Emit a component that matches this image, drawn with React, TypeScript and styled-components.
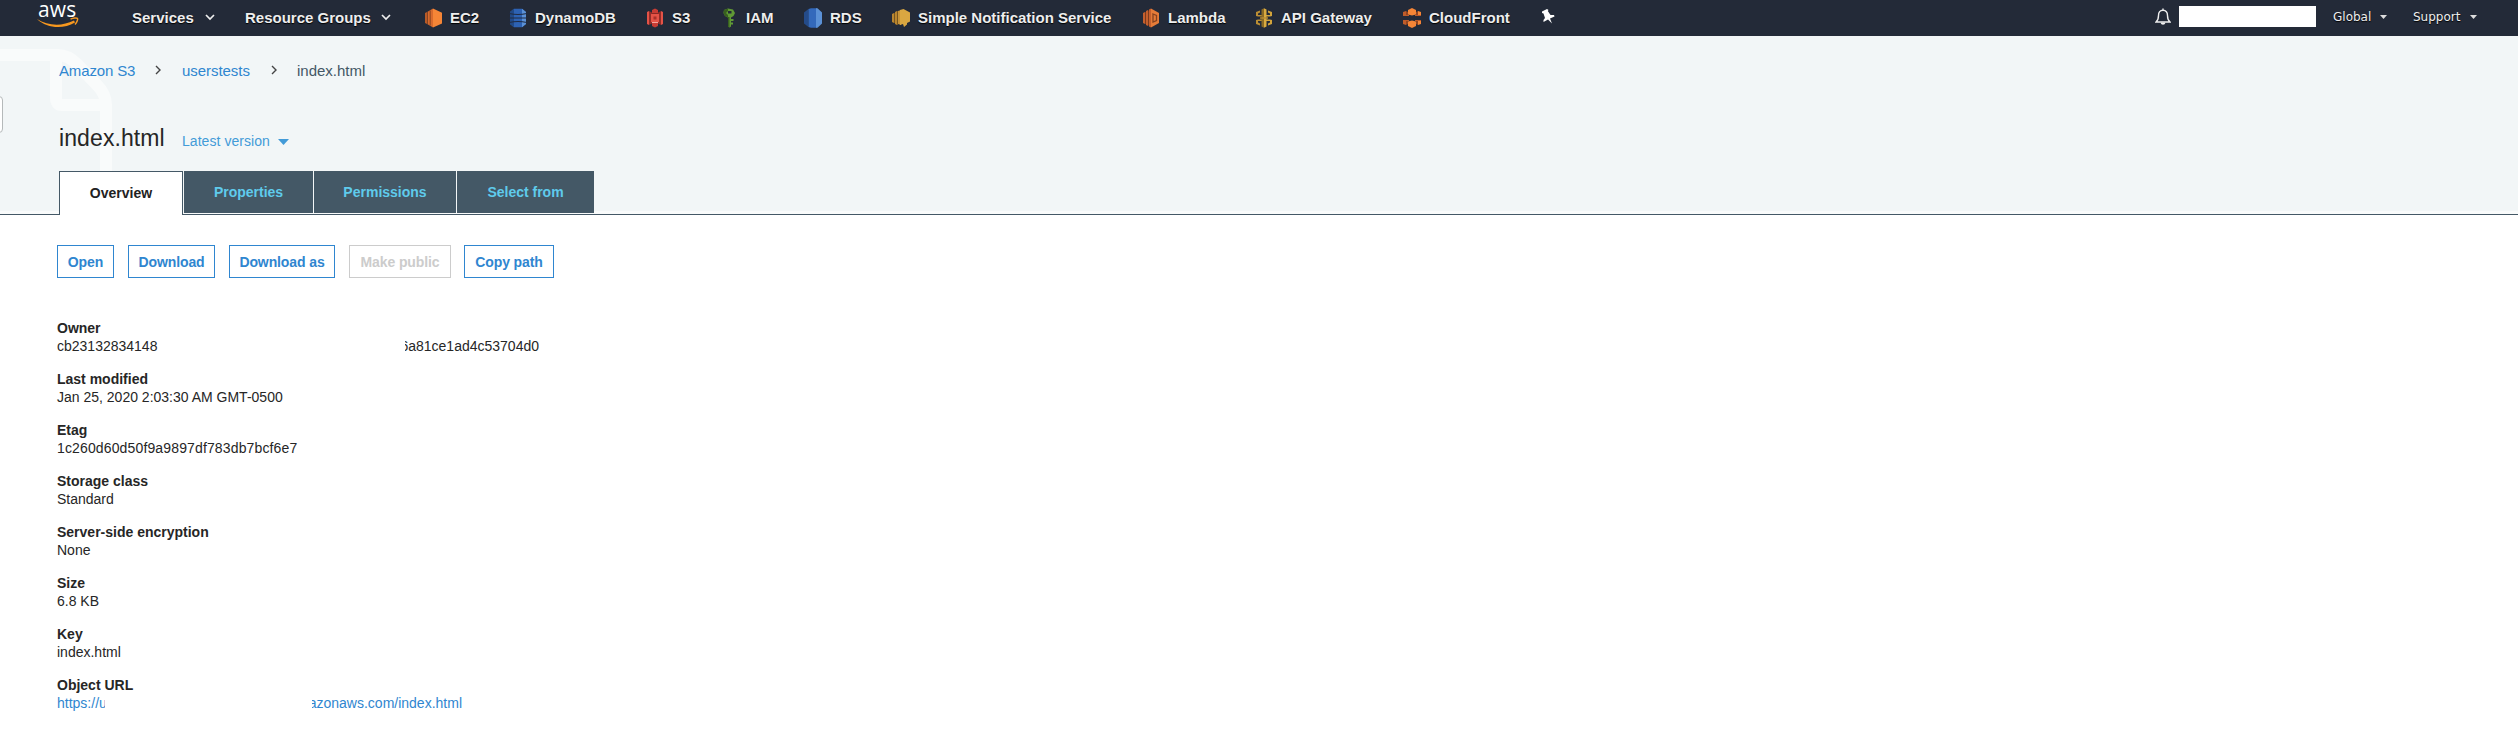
import React from "react";
import styled, { createGlobalStyle } from "styled-components";

const GlobalStyle = createGlobalStyle`
  * { box-sizing: border-box; }
  body { margin: 0; background: #fff; font-family: "Liberation Sans", Arial, sans-serif; font-size: 14px; color: #262626; }
  a { color: inherit; text-decoration: none; }
  svg { display: block; flex: none; }
`;

const Page = styled.div`
  height: 754px;
  overflow: hidden;
`;

const NavBar = styled.nav`
  display: flex;
  height: 36px;
  padding-left: 37px;
  background: #232a38;
  color: #eee;
  font-size: 15px;
  font-weight: bold;
  text-shadow: 0 1px 1px #000;
  white-space: nowrap;
`;

const Logo = styled.a`
  display: flex;
  flex-direction: column;
  width: 95px;
  color: #fff;
  font: 500 21px/20px "Open Sans", "Noto Sans", sans-serif;
  text-shadow: none;
  span { height: 17px; margin-top: -1px; padding-left: 1px; letter-spacing: 0.2px; }
`;

const NavMenu = styled.a<{ $width: number; $gap: number }>`
  display: flex;
  align-items: center;
  gap: ${(p) => p.$gap}px;
  width: ${(p) => p.$width}px;
  height: 34px;
`;

const Shortcut = styled.a<{ $width: number }>`
  display: flex;
  align-items: center;
  gap: 8px;
  width: ${(p) => p.$width}px;
  height: 36px;
  padding-bottom: 1px;
`;

const PinSlot = styled.div`
  padding-top: 9px;
`;

const Account = styled.div`
  display: flex;
  margin-left: auto;
  padding-right: 41px;
  font: 12px/34px "DejaVu Sans", sans-serif;
`;

const BellSlot = styled.div`
  width: 24px;
  padding-top: 8px;
`;

const AccountName = styled.div`
  width: 137px;
  height: 21px;
  margin: 6px 17px 0 0;
  background: #fff;
`;

const AccountMenu = styled.a<{ $width: number }>`
  display: flex;
  align-items: center;
  justify-content: space-between;
  width: ${(p) => p.$width}px;
  height: 34px;
  & + & { margin-left: 26px; }
`;

const Header = styled.header`
  position: relative;
  height: 179px;
  padding: 24px 0 0 59px;
  background: linear-gradient(#f2f6f7 175px, #f9fbfb 175px);
  border-bottom: 1px solid #445866;
`;

const FileWatermark = styled.svg`
  position: absolute;
  left: 0;
  top: 13px;
`;

const DrawerHandle = styled.div`
  position: absolute;
  left: -5px;
  top: 60px;
  width: 8px;
  height: 37px;
  border: 1px solid #b5b9ba;
  border-radius: 4px;
  background: #fff;
`;

const Breadcrumbs = styled.div`
  position: relative;
  display: flex;
  align-items: center;
  height: 20px;
  font-size: 15px;
  color: #445866;
`;

const Crumb = styled.a<{ $width: number; $spacing: number }>`
  width: ${(p) => p.$width}px;
  letter-spacing: ${(p) => p.$spacing}px;
  color: #2f86d0;
`;

const CrumbSlot = styled.span<{ $width: number }>`
  width: ${(p) => p.$width}px;
`;

const TitleRow = styled.div`
  position: relative;
  display: flex;
  align-items: baseline;
  height: 30px;
  margin-top: 43px;
`;

const Title = styled.h1`
  width: 123px;
  margin: 0;
  font-size: 23px;
  font-weight: normal;
  line-height: 30px;
  letter-spacing: 0.1px;
`;

const VersionMenu = styled.a`
  display: flex;
  align-items: baseline;
  gap: 8px;
  letter-spacing: 0.05px;
  color: #439bd8;
`;

const Tabs = styled.div`
  position: relative;
  display: flex;
  height: 44px;
  margin-top: 18px;
`;

const Tab = styled.a<{ $width: number; $active?: boolean }>`
  width: ${(p) => p.$width}px;
  height: ${(p) => (p.$active ? 44 : 42)}px;
  margin-right: 1px;
  border: ${(p) => (p.$active ? "1px solid #445866" : "0")};
  border-bottom: 0;
  background: ${(p) => (p.$active ? "#fff" : "#445866")};
  color: ${(p) => (p.$active ? "#222" : "#5fcbec")};
  font-weight: bold;
  line-height: 42px;
  text-align: center;
`;

const Actions = styled.div`
  display: flex;
  padding: 30px 0 0 57px;
`;

const ActionButton = styled.button<{ $width: number }>`
  width: ${(p) => p.$width}px;
  height: 33px;
  margin: 0 14px 0 0;
  padding: 1px 0 0;
  border: 1px solid #2f86d0;
  border-radius: 0;
  background: #fff;
  color: #2f86d0;
  font: bold 14px "Liberation Sans", Arial, sans-serif;
  letter-spacing: -0.1px;
  white-space: nowrap;
  &:disabled { border-color: #ccc; color: #ccc; }
  &:last-child { margin-left: -1px; }
`;

const Details = styled.dl`
  display: flex;
  flex-direction: column;
  gap: 15px;
  margin: 41px 0 0 57px;
  line-height: 18px;
`;

const Term = styled.dt`
  font-weight: bold;
`;

const Value = styled.dd<{ $link?: boolean; $spacing?: number }>`
  display: flex;
  height: 18px;
  margin: 0;
  letter-spacing: ${(p) => p.$spacing ?? 0}px;
  color: ${(p) => (p.$link ? "#2f86d0" : "inherit")};
`;

const Fragment = styled.span<{ $width: number; $end?: boolean }>`
  display: flex;
  justify-content: ${(p) => (p.$end ? "flex-end" : "flex-start")};
  width: ${(p) => p.$width}px;
  overflow: hidden;
`;

const Gap = styled.span<{ $width: number }>`
  width: ${(p) => p.$width}px;
`;

const Chevron = () => (
  <svg width="10" height="8" viewBox="0 0 10 8" fill="none" stroke="#eee" strokeWidth="1.7">
    <path d="M1 2l4 4 4-4" />
  </svg>
);

const CrumbArrow = () => (
  <svg width="6" height="10" viewBox="0 0 6 10" fill="none" stroke="#444" strokeWidth="1.4">
    <path d="M1 1l4 4-4 4" />
  </svg>
);

const Caret = () => (
  <svg width="7" height="4" viewBox="0 0 7 4">
    <path d="M0 0h7L3.5 4z" fill="#ddd" />
  </svg>
);

const ServiceIcon = ({ children }: { children: React.ReactNode }) => (
  <svg width="18" height="20" viewBox="0 0 18 20">{children}</svg>
);

const icons = {
  ec2: (
    <ServiceIcon>
      <path d="M1 5l3-1.500v13L1 15z" fill="#b95a27" />
      <path d="M4 3.500L9 .5v19l-5-3z" fill="#d86a2d" />
      <path d="M9 .5l9 4.300v10.600l-9 4.100z" fill="#f58536" />
      <path d="M3.500 4v12M6.200 2.500v15" stroke="#7f4121" strokeWidth=".9" />
    </ServiceIcon>
  ),
  dynamo: (
    <ServiceIcon>
      <path d="M1 4L5 .7h8L17 4v12l-4 3.300H5L1 16z" fill="#2d62b3" />
      <path d="M1 4L5 .7v18.600L1 16z" fill="#214a88" />
      <path d="M13 .7L17 4v12l-4 3.300z" fill="#5b91d6" />
      <path d="M0 5.500q9 2 18 0M0 10h18M0 14.500q9-2 18 0" fill="none" stroke="#202b42" strokeWidth="1.200" />
    </ServiceIcon>
  ),
  s3: (
    <ServiceIcon>
      <path d="M1 4l2-1v14l-2-1zM17 4l-2-1v14l2-1z" fill="#e55347" />
      <path d="M3 3l3 1.500v11L3 17zM15 3l-3 1.500v11l3 1.500z" fill="#922d28" />
      <path d="M9 .5l3 1.500v3.500H6V2zM9 19.500l3-1.500v-3.500H6V18z" fill="#c83c34" />
      <path d="M5 6h8v8H5z" fill="#e55347" />
      <path d="M7.500 8.500h3v3h-3z" fill="#a83029" />
      <path d="M6 5.500h6" stroke="#8c2723" />
      <path d="M6 14.500h6" stroke="#f4a39d" />
    </ServiceIcon>
  ),
  iam: (
    <ServiceIcon>
      <path d="M4 2L8 .5l5 1 2 3.500-1.500 3-2.500 1.500v9L9.500 19.500 8 18.500V9.500L5 8 3.500 5z" fill="#609a35" />
      <path d="M4 2L8 .5v2.500L6 5l2 2v11.500V9.500L5 8 3.500 5z" fill="#38601f" />
      <path d="M8 9h1.500v10.500L8 18.500z" fill="#38601f" />
      <path d="M8 3h3.500v2.500H8z" fill="#232a38" />
      <path d="M11 11h2.500v2H11zM11 14.500h2v2h-2z" fill="#609a35" />
    </ServiceIcon>
  ),
  rds: (
    <ServiceIcon>
      <path d="M0 4.500L4.500 1v18L0 15.500z" fill="#244b89" />
      <path d="M4.500 1L7 .2h6v19.600H7L4.500 19z" fill="#3369bb" />
      <path d="M12 .2h1.500L18 4.500v11l-4.500 4.300H12z" fill="#5b91d6" />
    </ServiceIcon>
  ),
  sns: (
    <ServiceIcon>
      <path d="M0 6l2-1v10l-2-1zM3 4l2-1v14l-2-1z" fill="#b9852f" />
      <path d="M2 5h1v10H2zM5 3h1v14H5z" fill="#76551f" />
      <path d="M6 3l3-1v15l-3-1z" fill="#c89438" />
      <path d="M8 2l3.500-1L18 4.500v9L15 15v1.500L12 19l-1-3-3 1z" fill="#d9a741" />
    </ServiceIcon>
  ),
  lambda: (
    <ServiceIcon>
      <path d="M1 5l2-1v12l-2-1zM4 3l2-1v16l-2-1zM7 1.500L9 .5v19l-2-1z" fill="#c45f2d" />
      <path d="M3 4h1v12H3zM6 2.500h1v15H6z" fill="#7c3a1c" />
      <path d="M9 .5L17 5v10l-8 4.500z" fill="#e57b38" />
      <path d="M11 6l3.500 1.500v5L11 14z" fill="none" stroke="#85421f" strokeWidth="1.300" />
    </ServiceIcon>
  ),
  api: (
    <ServiceIcon>
      <path d="M1 4l4-1.500v2L3 5.500V7h4v1.500H3L1 8zM1 16l4 1.500v-2l-2-1V13h4v-1.500H3L1 12z" fill="#bb8e34" />
      <path d="M17 4l-4-1.500v2l2 1V7h-4v1.500h4l2-.500zM17 16l-4 1.500v-2l2-1V13h-4v-1.500h4l2 .500z" fill="#d2a33b" />
      <path d="M6.500 1.500L9 .2v19.600l-2.500-1.300z" fill="#8a6a26" />
      <path d="M9 .2l2.500 1.300v17L9 19.800z" fill="#d9aa3f" />
      <path d="M5 9.300h8v1.400H5z" fill="#bb8e34" />
    </ServiceIcon>
  ),
  cloudfront: (
    <ServiceIcon>
      <path d="M0 4l3-1v4.500H0zM0 12.500h3V17l-3-1z" fill="#bf5c2a" />
      <path d="M18 4l-3-1v4.500h3zM18 12.500h-3V17l3-1z" fill="#f58536" />
      <path d="M3 3l2 1v3.500H3zM13 4l2-1v4.500h-2zM3 12.500h2V16l-2 1zM13 12.500h2V17l-2-1z" fill="#93451f" />
      <path d="M5 2l4-2 4 2v4.500L9 7.500 5 6.500zM5 13.500l4-1 4 1V18l-4 2-4-2z" fill="#f58536" />
      <path d="M0 7h6v1H0zM12 7h6v1h-6zM0 12h6v1H0zM12 12h6v1h-6z" fill="#bc5a29" />
    </ServiceIcon>
  ),
};

const shortcuts = [
  { icon: icons.ec2, label: "EC2", width: 85 },
  { icon: icons.dynamo, label: "DynamoDB", width: 137 },
  { icon: icons.s3, label: "S3", width: 74 },
  { icon: icons.iam, label: "IAM", width: 84 },
  { icon: icons.rds, label: "RDS", width: 88 },
  { icon: icons.sns, label: "Simple Notification Service", width: 250 },
  { icon: icons.lambda, label: "Lambda", width: 113 },
  { icon: icons.api, label: "API Gateway", width: 148 },
  { icon: icons.cloudfront, label: "CloudFront", width: 138 },
];

const details = [
  { term: "Last modified", value: "Jan 25, 2020 2:03:30 AM GMT-0500" },
  { term: "Etag", value: "1c260d60d50f9a9897df783db7bcf6e7", spacing: 0.14 },
  { term: "Storage class", value: "Standard" },
  { term: "Server-side encryption", value: "None" },
  { term: "Size", value: "6.8 KB" },
  { term: "Key", value: "index.html" },
];

export default function App() {
  return (
    <Page>
      <GlobalStyle />
      <NavBar>
        <Logo>
          <span>aws</span>
          <svg width="42" height="12" viewBox="0 0 42 12" fill="none" stroke="#f7981f">
            <path d="M0 3C11 10 25 10.500 37 4.500L38 6.500C26 13.500 10 12.500 0 3z" fill="#f7981f" stroke="none" />
            <path d="M33.500 3.200c3-1.500 6.500-1.500 7-.7s-.5 4-2.500 6" strokeWidth="1.500" />
          </svg>
        </Logo>
        <NavMenu $width={113} $gap={11}>Services <Chevron /></NavMenu>
        <NavMenu $width={179} $gap={10}>Resource Groups <Chevron /></NavMenu>
        {shortcuts.map((s) => (
          <Shortcut key={s.label} $width={s.width}>
            {s.icon}
            {s.label}
          </Shortcut>
        ))}
        <PinSlot>
          <svg width="14" height="15" viewBox="0 0 14 15" fill="#fff">
            <path d="M1 2.500L6 0l1.500 1-.7 1L9.500 6l3.500 0 .5 1.500-4.500 2 2 5-4-4-4.500 2.500V11l1.500-2L2.500 4.500 1 4z" />
          </svg>
        </PinSlot>
        <Account>
          <BellSlot>
            <svg width="16" height="18" viewBox="0 0 16 18" fill="none" stroke="#eee" strokeWidth="1.400">
              <path d="M8 .5v2M1 14c2-1.500 2.500-3.500 2.500-6.500C3.500 4 5 2.300 8 2.300s4.500 1.700 4.500 5.200c0 3 .5 5 2.500 6.500z" />
              <path d="M5.700 14.500h4.600c0 3-4.600 3-4.600 0z" fill="#eee" stroke="none" />
            </svg>
          </BellSlot>
          <AccountName />
          <AccountMenu $width={54}>Global <Caret /></AccountMenu>
          <AccountMenu $width={64}>Support <Caret /></AccountMenu>
        </Account>
      </NavBar>

      <Header>
        <FileWatermark width="113" height="122" viewBox="0 0 113 122" fill="none" stroke="#f9fbfb" strokeWidth="12">
          <path d="M-6 6H58Q68 6 77 15L97 36Q106 45 106 56V130" />
          <path d="M56 8V49Q56 56 62 56H106" />
        </FileWatermark>
        <DrawerHandle />
        <Breadcrumbs>
          <Crumb $width={96} $spacing={-0.15}>Amazon S3</Crumb>
          <CrumbSlot $width={27}><CrumbArrow /></CrumbSlot>
          <Crumb $width={89} $spacing={-0.05}>userstests</Crumb>
          <CrumbSlot $width={26}><CrumbArrow /></CrumbSlot>
          index.html
        </Breadcrumbs>
        <TitleRow>
          <Title>index.html</Title>
          <VersionMenu>
            Latest version
            <svg width="11" height="7" viewBox="0 0 11 7"><path d="M0 0h11L5.500 6z" fill="#439bd8" /></svg>
          </VersionMenu>
        </TitleRow>
        <Tabs>
          <Tab $width={124} $active>Overview</Tab>
          <Tab $width={129}>Properties</Tab>
          <Tab $width={142}>Permissions</Tab>
          <Tab $width={137}>Select from</Tab>
        </Tabs>
      </Header>

      <Actions>
        <ActionButton $width={57}>Open</ActionButton>
        <ActionButton $width={87}>Download</ActionButton>
        <ActionButton $width={106}>Download as</ActionButton>
        <ActionButton $width={102} disabled>Make public</ActionButton>
        <ActionButton $width={90}>Copy path</ActionButton>
      </Actions>

      <Details>
        <div>
          <Term>Owner</Term>
          <Value>
            <Fragment $width={102}>cb23132834148</Fragment>
            <Gap $width={246} />
            <Fragment $width={134} $end>6a81ce1ad4c53704d0</Fragment>
          </Value>
        </div>
        {details.map((d) => (
          <div key={d.term}>
            <Term>{d.term}</Term>
            <Value $spacing={d.spacing}>{d.value}</Value>
          </div>
        ))}
        <div>
          <Term>Object URL</Term>
          <Value $link>
            <Fragment $width={48}>https://u</Fragment>
            <Gap $width={207} />
            <Fragment $width={150} $end>azonaws.com/index.html</Fragment>
          </Value>
        </div>
      </Details>
    </Page>
  );
}
